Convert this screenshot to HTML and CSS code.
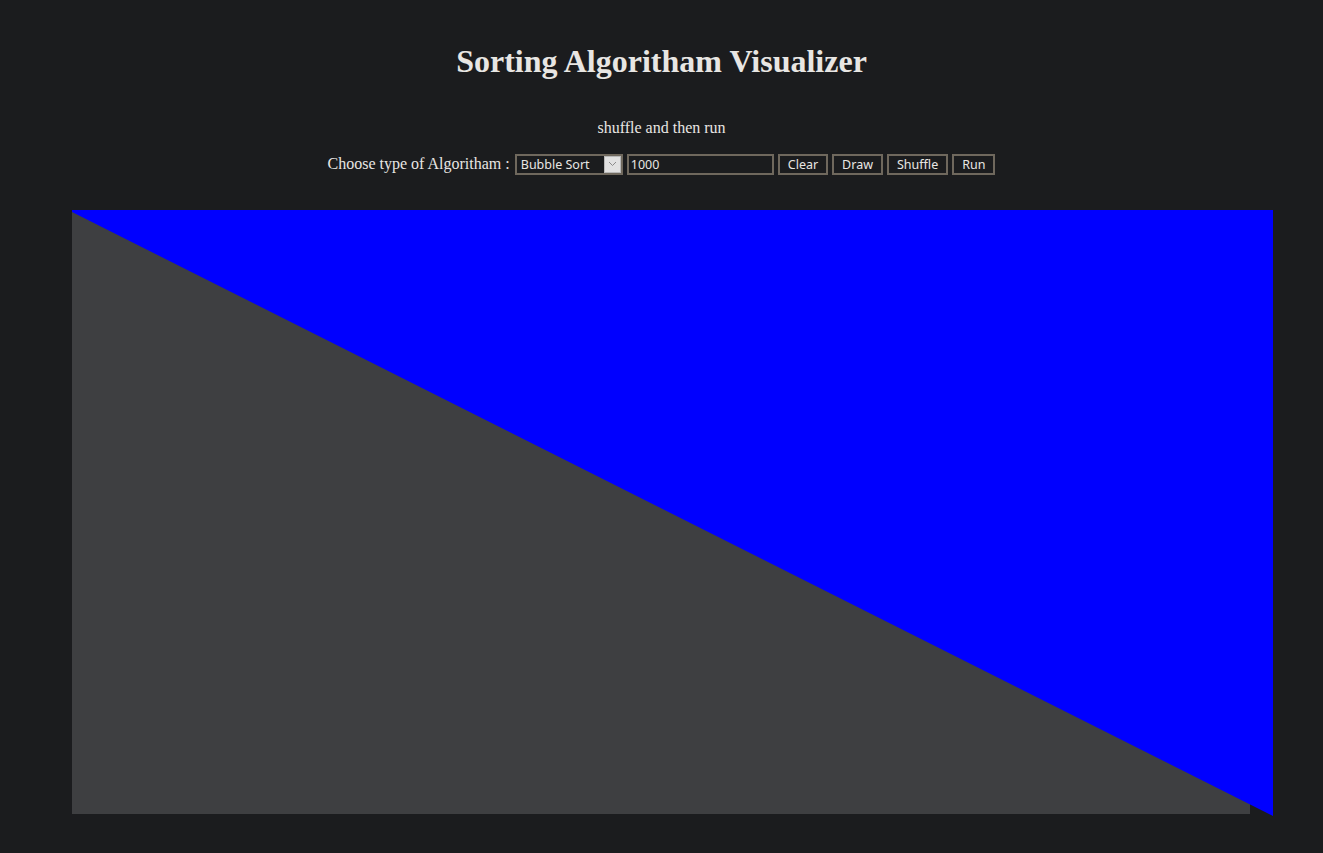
FILE: index.html
```html
<!DOCTYPE html>
<html lang="en">
<head>
<meta charset="utf-8">
<title>Sorting Algoritham Visualizer</title>
<link rel="stylesheet" href="styles.css">
</head>
<body>
<header class="head">
  <h1 class="title">Sorting Algoritham Visualizer</h1>
  <p class="hint">shuffle and then run</p>
  <div class="controls">
    <label class="label" for="algo">Choose type of Algoritham :</label>
    <span class="select-wrap">
      <select id="algo" class="select">
        <option>Bubble Sort</option>
        <option>Selection Sort</option>
        <option>Insertion Sort</option>
      </select>
      <span class="select-arrow">
        <svg width="9" height="6" viewBox="0 0 9 6"><path d="M1 1 L4.5 4.5 L8 1" fill="none" stroke="#8a8a8a" stroke-width="1"/></svg>
      </span>
    </span>
    <input class="num" type="text" value="1000">
    <button class="btn">Clear</button>
    <button class="btn">Draw</button>
    <button class="btn">Shuffle</button>
    <button class="btn">Run</button>
  </div>
</header>
<main class="stage">
  <svg class="canvas" width="1201" height="606" viewBox="0 0 1201 606">
    <rect x="0" y="0" width="1178" height="604" fill="#3e3f41"/>
    <polygon points="0,0 1201,0 1201,606 0,2" fill="#0000ff"/>
  </svg>
</main>
</body>
</html>
```

FILE: styles.css
```css
html, body {
  margin: 0;
  padding: 0;
  background: #1b1c1e;
  color: #e8e6e3;
  font-family: "Liberation Serif", "Times New Roman", serif;
}

.head {
  text-align: center;
  padding-top: 43px;
}

.title {
  margin: 0;
  font-size: 32px;
  line-height: 36px;
  font-weight: bold;
}

.hint {
  margin: 40px 0 0 0;
  font-size: 16px;
  line-height: 18px;
}

.controls {
  margin-top: 16px;
  display: flex;
  justify-content: center;
  align-items: center;
  gap: 4px;
  height: 22px;
}

.label {
  font-size: 16px;
  margin-right: 1px;
}

.select-wrap {
  position: relative;
  display: inline-block;
  height: 21px;
}

.select {
  appearance: none;
  -webkit-appearance: none;
  width: 108px;
  height: 21px;
  box-sizing: border-box;
  border: 2px solid #6f685d;
  background: #1b1c1e;
  color: #e8e6e3;
  font-family: "Noto Sans", "DejaVu Sans", sans-serif;
  font-size: 12.5px;
  padding: 0 0 0 4px;
  border-radius: 0;
  outline: none;
}

.select-arrow {
  position: absolute;
  top: 2px;
  right: 2px;
  width: 17px;
  height: 17px;
  background: #e1e1e1;
  border: 1px solid #b8b8b8;
  box-sizing: border-box;
  display: flex;
  align-items: center;
  justify-content: center;
  pointer-events: none;
}

.num {
  width: 147px;
  height: 21px;
  box-sizing: border-box;
  border: 2px solid #6f685d;
  background: #1b1c1e;
  color: #e8e6e3;
  font-family: "Noto Sans", "DejaVu Sans", sans-serif;
  font-size: 12.5px;
  padding: 0 2px;
  outline: none;
}

.btn {
  height: 21px;
  box-sizing: border-box;
  border: 2px solid #6f685d;
  background: #1b1c1e;
  color: #e8e6e3;
  font-family: "Noto Sans", "DejaVu Sans", sans-serif;
  font-size: 12.5px;
  padding: 0 8px;
  line-height: 15px;
}

.stage {
  padding: 35px 0 0 72px;
}

.canvas {
  display: block;
}
```
